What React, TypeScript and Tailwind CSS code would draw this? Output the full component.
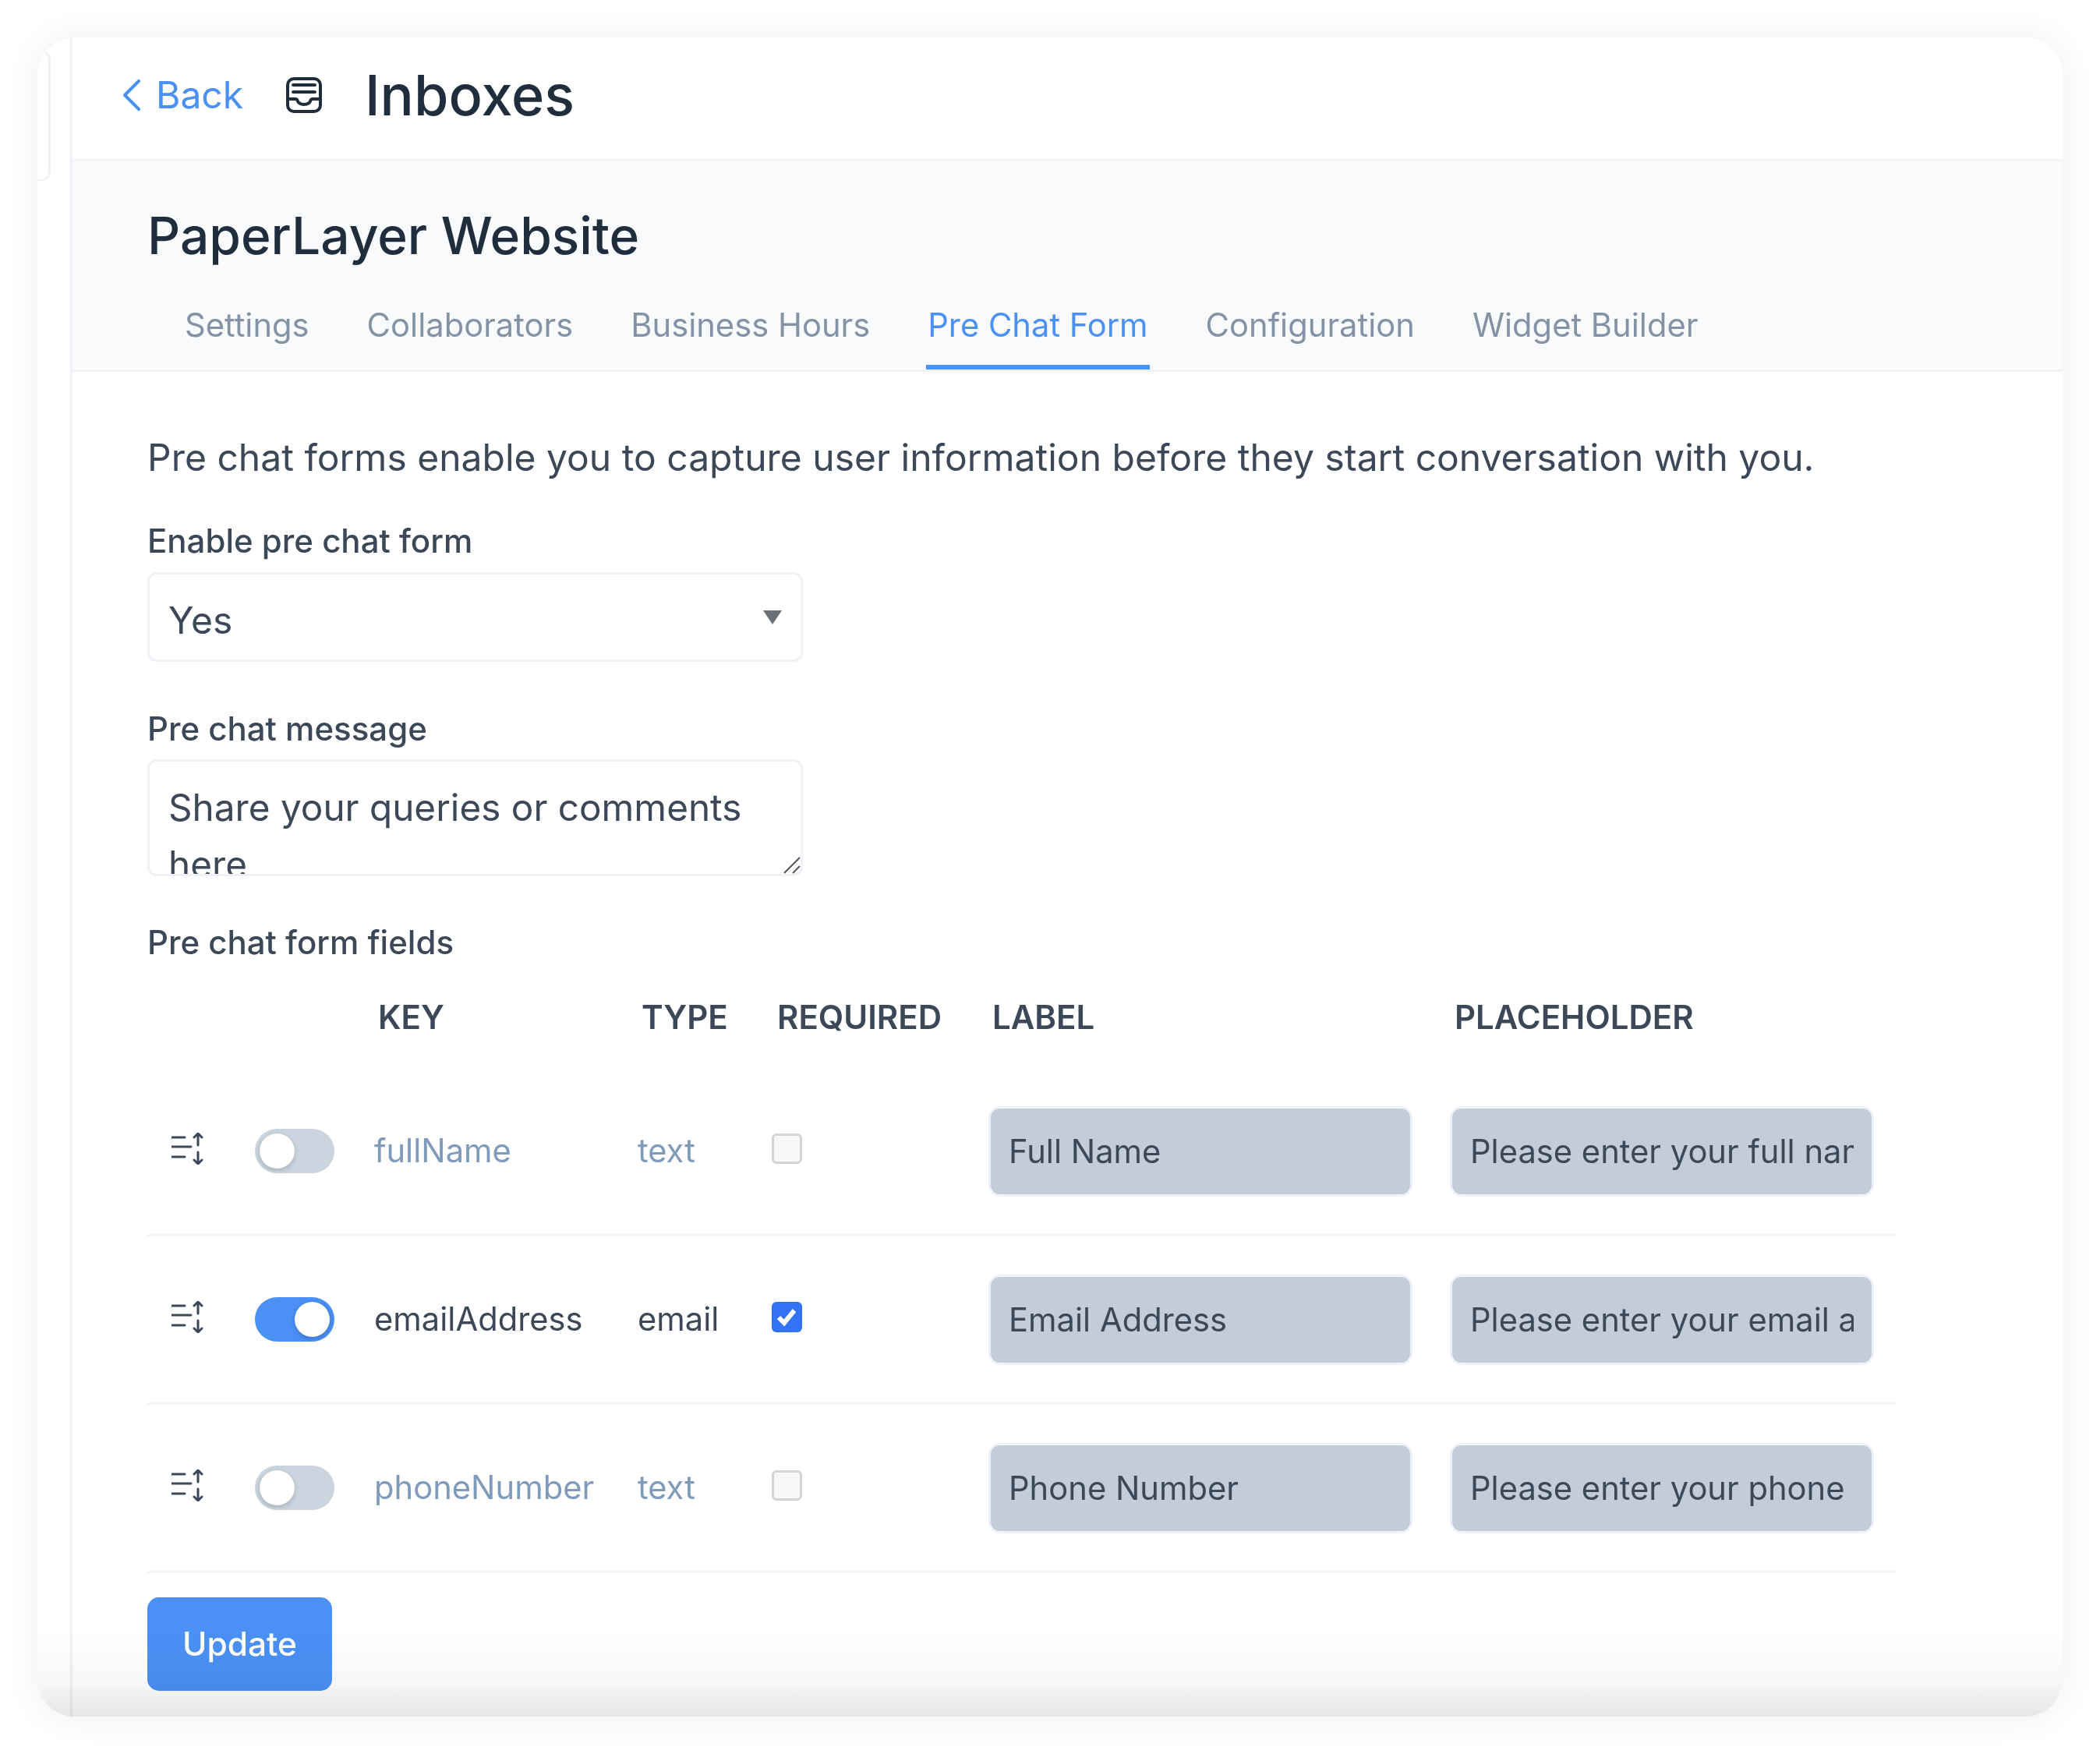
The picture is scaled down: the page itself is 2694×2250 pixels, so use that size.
import { ChevronLeft } from 'lucide-react';

const tabs = ['Settings', 'Collaborators', 'Business Hours', 'Pre Chat Form', 'Configuration', 'Widget Builder'];

const fields = [
  { name: 'fullName', type: 'text', enabled: false, label: 'Full Name', placeholder: 'Please enter your full name' },
  { name: 'emailAddress', type: 'email', enabled: true, label: 'Email Address', placeholder: 'Please enter your email address' },
  { name: 'phoneNumber', type: 'text', enabled: false, label: 'Phone Number', placeholder: 'Please enter your phone number' },
];

const columns = 'grid grid-cols-[138px_153px_338px_172px_278px_592px_572px] items-center';

function InboxIcon() {
  return (
    <svg width="46" height="46" viewBox="0 0 46 46" fill="none" stroke="#1f2d3d" strokeWidth="4" strokeLinecap="round" strokeLinejoin="round">
      <rect x="2" y="2" width="42" height="42" rx="8" />
      <path d="M9 10h28M9 19h28" />
      <path d="M2 28h10c1 0 2 .6 2.400 1.600C15.500 33 19 35 23 35s7.500-2 8.600-5.400c.4-1 1.400-1.600 2.400-1.600h10" />
    </svg>
  );
}

function SortIcon() {
  return (
    <svg width="42" height="41" viewBox="0 0 42 41" fill="none" stroke="#3c4858" strokeWidth="3" strokeLinecap="round" strokeLinejoin="round">
      <path d="M1 6h16M1 18h24M1 31h16" />
      <path d="M34 1v15M29 6l5-5 5 5" />
      <path d="M34 25v15M29 35l5 5 5-5" />
    </svg>
  );
}

function Toggle({ on }: { on: boolean }) {
  return (
    <div className={`flex h-[57px] w-[102px] items-center rounded-full px-[6px] ${on ? 'justify-end bg-[#4a90f5]' : 'justify-start bg-[#cbd5df]'}`}>
      <div className="h-[45px] w-[45px] rounded-full bg-white shadow-[0_2px_6px_rgba(0,0,0,0.2)]" />
    </div>
  );
}

export default function App() {
  return (
    <div className="h-[2250px] w-[2694px] overflow-hidden bg-white p-[48px] font-['Inter',sans-serif] text-[#3c4858]">
      <div className="relative flex h-[2154px] w-[2598px] overflow-hidden rounded-[48px] bg-white shadow-[0_0_48px_rgba(0,0,0,0.07)]">
        {/* Sidebar edge */}
        <aside className="w-[45px] shrink-0 border-r-[3px] border-[#eef2f6] pt-[17px]">
          <div className="h-[167px] w-[17px] rounded-r-[12px] border-y-[2px] border-r-[3px] border-[#eef2f6]" />
        </aside>

        <main className="flex min-w-0 flex-1 flex-col">
          {/* Top bar */}
          <header className="flex h-[159px] shrink-0 items-center border-b-[3px] border-[#f1f3f7] pb-[9px] pl-[40px]">
            <div className="flex w-[234px] items-center text-[#4a90f5]">
              <ChevronLeft className="h-[72px] w-[72px] shrink-0" strokeWidth={1.35} />
              <span className="ml-[-5px] text-[48px]">Back</span>
            </div>
            <InboxIcon />
            <h1 className="ml-[55px] text-[72px] font-medium text-[#1f2d3d]">Inboxes</h1>
          </header>

          {/* Inbox title and tabs */}
          <section className="h-[270px] shrink-0 border-b-[3px] border-[#f1f3f7] bg-[#f9fafc] pl-[96px]">
            <h2 className="pt-[55px] text-[65.800px] leading-[80px] font-medium text-[#1f2d3d]">PaperLayer Website</h2>
            <nav className="mt-[49px] ml-[46px] flex gap-[70px]">
              {tabs.map((tab) => (
                <div
                  key={tab}
                  className={`h-[83px] border-b-[6px] px-[2px] text-[41.700px] leading-[52px] ${tab === 'Pre Chat Form' ? 'border-[#4a93f9] text-[#4a90f5]' : 'border-transparent text-[#8492a6]'}`}
                >
                  {tab}
                </div>
              ))}
            </nav>
          </section>

          {/* Form */}
          <section className="flex-1 pl-[96px]">
            <p className="mt-[82px] text-[48px] leading-[56px]">Pre chat forms enable you to capture user information before they start conversation with you.</p>

            <label className="mt-[54px] block text-[42px] leading-[50px] font-medium">Enable pre chat form</label>
            <div className="relative mt-[15px] w-[841px]">
              <select className="block h-[115px] w-full appearance-none rounded-[12px] border-[3px] border-[#eef1f6] bg-white pt-[8px] pl-[24px] text-[48px] text-[#3c4858] outline-none">
                <option>Yes</option>
              </select>
              <svg width="24" height="18" viewBox="0 0 24 18" className="absolute top-[49px] right-[27px]">
                <path d="M0 0h24L12 18z" fill="#6b6f76" />
              </svg>
            </div>

            <label className="mt-[61px] block text-[42px] leading-[50px] font-medium">Pre chat message</label>
            <div className="relative mt-[14px] w-[841px]">
              <textarea
                readOnly
                value="Share your queries or comments here"
                className="block h-[150px] w-full resize-none overflow-hidden rounded-[12px] border-[3px] border-[#eef1f6] bg-white px-[24px] pt-[23px] text-[47.700px] leading-[73px] text-[#3c4858] outline-none"
              />
              <svg width="24" height="24" viewBox="0 0 24 24" className="absolute right-[2px] bottom-[2px]" stroke="#55585e" strokeWidth="2">
                <path d="M2 22L22 2M13 22l9-9" />
              </svg>
            </div>

            <label className="mt-[60px] block text-[42px] leading-[50px] font-medium">Pre chat form fields</label>

            {/* Field table */}
            <div className="w-[2243px]">
              <div className={`${columns} mt-[39px] h-[50px] text-[42px] font-semibold uppercase`}>
                <span />
                <span />
                <span className="pl-[5px]">Key</span>
                <span className="pl-[5px]">Type</span>
                <span className="pl-[7px]">Required</span>
                <span className="pl-[5px]">Label</span>
                <span className="pl-[6px]">Placeholder</span>
              </div>
              <div className="mt-[47px]">
                {fields.map((field) => (
                  <div key={field.name} className={`${columns} h-[216px] border-b-[3px] border-[#f1f4f8]`}>
                    <div className="mb-[7px] pl-[31px]">
                      <SortIcon />
                    </div>
                    <Toggle on={field.enabled} />
                    <span className={`text-[41.700px] ${field.enabled ? 'text-[#3c4858]' : 'text-[#7f9bbb]'}`}>{field.name}</span>
                    <span className={`text-[41.700px] ${field.enabled ? 'text-[#3c4858]' : 'text-[#7f9bbb]'}`}>{field.type}</span>
                    <div className="mb-[7px]">
                      {field.enabled ? (
                        <div className="flex h-[39px] w-[39px] items-center justify-center rounded-[6px] bg-[#3273f6]">
                          <svg width="29" height="29" viewBox="0 0 29 29" fill="none" stroke="#fff" strokeWidth="6">
                            <path d="M4 15l7 7L24 6" />
                          </svg>
                        </div>
                      ) : (
                        <div className="h-[39px] w-[39px] rounded-[6px] border-[3px] border-[#d4d4d4] bg-[#f8f8f8]" />
                      )}
                    </div>
                    <input
                      readOnly
                      value={field.label}
                      className="h-[116px] w-[544px] rounded-[15px] border-[3px] border-[#eef1f6] bg-[#c3ccd9] px-[23px] text-[41.700px] text-[#3c4858] outline-none"
                    />
                    <input
                      readOnly
                      value={field.placeholder}
                      className="h-[116px] w-[544px] rounded-[15px] border-[3px] border-[#eef1f6] bg-[#c3ccd9] px-[23px] text-[41.700px] text-[#3c4858] outline-none"
                    />
                  </div>
                ))}
              </div>
            </div>

            <button type="button" className="mt-[31px] h-[120px] w-[237px] rounded-[15px] bg-[#4a90f5] text-[42.500px] font-medium text-white">
              Update
            </button>
          </section>
        </main>

        {/* Bottom fade */}
        <div className="pointer-events-none absolute inset-x-0 bottom-0 h-[110px] bg-gradient-to-b from-white via-[#f7f7f7] via-60% to-[#e6e6e6] mix-blend-multiply" />
      </div>
    </div>
  );
}
